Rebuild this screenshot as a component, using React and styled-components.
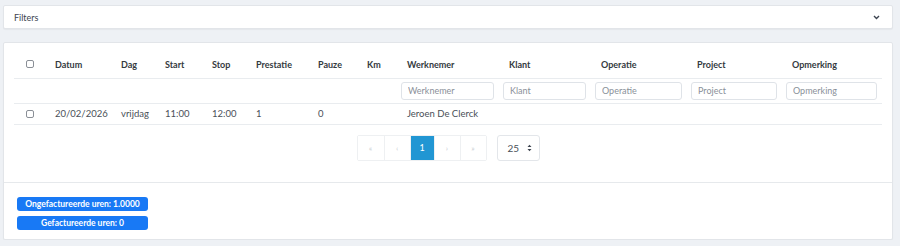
import React from "react";
import styled, { createGlobalStyle } from "styled-components";

const Global = createGlobalStyle`
  html, body { margin: 0; padding: 0; background: #eef1f5; }
  body { font-family: Lato, "Open Sans", sans-serif; color: #495057; }
  * { box-sizing: border-box; }
`;

const Page = styled.div`
  padding: 5px 7px 0 3px;
  display: flex;
  flex-direction: column;
  gap: 13px;
`;

const Card = styled.div`
  background: #fff;
  border: 1px solid #e2e5e9;
  border-radius: 2px;
  box-shadow: 0 1px 1px rgba(0, 0, 0, 0.04);
`;

const FilterHeader = styled.div`
  height: 22px;
  display: flex;
  align-items: center;
  justify-content: space-between;
  padding: 0 12px 0 10px;
  font-size: 9px;
  color: #3d4450;
`;

const Chevron = styled.svg`
  width: 7px;
  height: 5px;
`;

const Body = styled.div`
  padding: 8px 10px 0 10px;
`;

const Table = styled.table`
  width: 868px;
  table-layout: fixed;
  border-collapse: collapse;
  font-size: 9px;
`;

const Th = styled.th`
  height: 27px;
  text-align: left;
  font-weight: 700;
  color: #343a40;
  padding: 0 0 0 6px;
  border-bottom: 1px solid #e9ecef;
  vertical-align: middle;
`;

const FilterTd = styled.td`
  height: 25px;
  padding: 0 ${(p) => p.$pr ?? 8}px 0 0;
  border-bottom: 1px solid #e9ecef;
  vertical-align: middle;
`;

const Td = styled.td`
  height: 21px;
  padding: 0 0 0 6px;
  color: #4a5058;
  border-bottom: 1px solid #e9ecef;
  vertical-align: middle;
  white-space: nowrap;
  font-size: 9.5px;
`;

const CheckCell = styled.div`
  display: flex;
  padding-left: 6px;
`;

const Check = styled.span`
  width: 8px;
  height: 8px;
  border: 1px solid #8a8f96;
  border-radius: 2px;
  display: inline-block;
  background: #fff;
`;

const Input = styled.input`
  display: block;
  width: 100%;
  height: 18px;
  border: 1px solid #dfe3e8;
  border-radius: 3px;
  padding: 0 6px;
  font-family: inherit;
  font-size: 9px;
  color: #495057;
  outline: none;
  &::placeholder { color: #8a9099; }
`;

const PagerRow = styled.div`
  display: flex;
  justify-content: center;
  align-items: center;
  gap: 10px;
  padding: 10px 0 21px;
`;

const Pager = styled.div`
  display: flex;
  border: 1px solid #eef0f2;
  border-radius: 2px;
`;

const PageBtn = styled.div`
  width: ${(p) => (p.$active ? 24 : 26)}px;
  height: 24px;
  display: flex;
  align-items: center;
  justify-content: center;
  font-size: ${(p) => (p.$active ? 9 : 8)}px;
  color: ${(p) => (p.$active ? "#fff" : "#c8ccd2")};
  background: ${(p) => (p.$active ? "#2196d3" : "#fff")};
  border-left: ${(p) => (p.$first ? "none" : "1px solid #eef0f2")};
`;

const SizeSelect = styled.div`
  width: 43px;
  height: 26px;
  border: 1px solid #e3e6ea;
  border-radius: 3px;
  display: flex;
  align-items: center;
  justify-content: space-between;
  padding: 0 7px 0 10px;
  font-size: 10px;
  color: #4a5058;
`;

const Footer = styled.div`
  border-top: 1px solid #e6e9ec;
  padding: 14px 0 9px 13px;
  display: flex;
  flex-direction: column;
  gap: 5px;
`;

const Badge = styled.div`
  width: 131px;
  height: 14px;
  background: #1879f5;
  border-radius: 3px;
  color: #fff;
  font-weight: 700;
  font-size: 8.5px;
  display: flex;
  align-items: center;
  justify-content: center;
`;

const cols = [35, 66, 44, 47, 44, 62, 49, 40, 102, 92, 96, 95, 96];
const headers = ["Datum", "Dag", "Start", "Stop", "Prestatie", "Pauze", "Km", "Werknemer", "Klant", "Operatie", "Project", "Opmerking"];
const filterCols = ["Werknemer", "Klant", "Operatie", "Project", "Opmerking"];
const row = ["20/02/2026", "vrijdag", "11:00", "12:00", "1", "0", "", "Jeroen De Clerck", "", "", "", ""];

export default function App() {
  return (
    <>
      <Global />
      <Page>
        <Card>
          <FilterHeader>
            <span>Filters</span>
            <Chevron viewBox="0 0 7 5">
              <path d="M1 1 L3.5 3.5 L6 1" stroke="#3d4450" strokeWidth="1.4" fill="none" />
            </Chevron>
          </FilterHeader>
        </Card>
        <Card>
          <Body>
            <Table>
              <colgroup>
                {cols.map((w, i) => (
                  <col key={i} style={{ width: w }} />
                ))}
              </colgroup>
              <thead>
                <tr>
                  <Th>
                    <CheckCell><Check /></CheckCell>
                  </Th>
                  {headers.map((h) => (
                    <Th key={h}>{h}</Th>
                  ))}
                </tr>
                <tr>
                  {Array.from({ length: 8 }).map((_, i) => (
                    <FilterTd key={i} />
                  ))}
                  {filterCols.map((f, i) => (
                    <FilterTd key={f} $pr={i === 4 ? 5 : 9}>
                      <Input placeholder={f} />
                    </FilterTd>
                  ))}
                </tr>
              </thead>
              <tbody>
                <tr>
                  <Td>
                    <CheckCell><Check /></CheckCell>
                  </Td>
                  {row.map((c, i) => (
                    <Td key={i}>{c}</Td>
                  ))}
                </tr>
              </tbody>
            </Table>
            <PagerRow>
              <Pager>
                <PageBtn $first>«</PageBtn>
                <PageBtn>‹</PageBtn>
                <PageBtn $active>1</PageBtn>
                <PageBtn>›</PageBtn>
                <PageBtn>»</PageBtn>
              </Pager>
              <SizeSelect>
                <span>25</span>
                <svg width="5" height="8" viewBox="0 0 5 8">
                  <path d="M0.5 3 L2.5 0.8 L4.5 3 Z M0.5 5 L2.5 7.2 L4.5 5 Z" fill="#3d4450" />
                </svg>
              </SizeSelect>
            </PagerRow>
          </Body>
          <Footer>
            <Badge>Ongefactureerde uren: 1.0000</Badge>
            <Badge>Gefactureerde uren: 0</Badge>
          </Footer>
        </Card>
      </Page>
    </>
  );
}
